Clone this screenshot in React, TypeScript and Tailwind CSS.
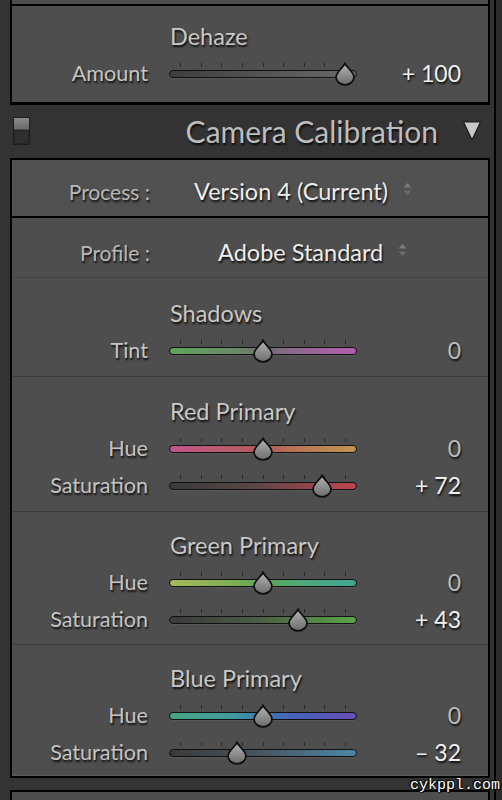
import React from "react";

const FONT = { fontFamily: "Lato, 'Open Sans', sans-serif" };

type SliderProps = { value: number; gradient: string };

function Slider({ value, gradient }: SliderProps) {
  const center = 94 + value * 0.82;
  return (
    <div className="relative w-[188px] h-[24px] flex flex-col justify-end pb-[5px]">
      <div className="flex justify-between px-[11px] h-[4px] mb-[3px]">
        {Array.from({ length: 9 }).map((_, i) => (
          <div key={i} className="w-[1px] h-[4px] bg-[#2a2a2a]" />
        ))}
      </div>
      <div
        className="h-[8px] rounded-full border border-[#111] shadow-[0_1px_0_rgba(255,255,255,0.06)]"
        style={{ background: gradient }}
      />
      <svg
        className="absolute top-[3px]"
        style={{ left: center - 11 }}
        width="22"
        height="24"
        viewBox="0 0 22 24"
      >
        <defs>
          <linearGradient id="thumbg" x1="0" y1="0" x2="0" y2="1">
            <stop offset="0" stopColor="#b4b4b4" />
            <stop offset="1" stopColor="#6c6c6c" />
          </linearGradient>
        </defs>
        <path
          d="M11 1.5 C 13 5.5, 20 10.5, 20 15 A 9 7.8 0 0 1 2 15 C 2 10.5, 9 5.5, 11 1.5 Z"
          fill="url(#thumbg)"
          stroke="#0e0e0e"
          strokeWidth="1.8"
        />
      </svg>
    </div>
  );
}

type RowProps = { label: string; value: number; gradient: string; text: string };

function Row({ label, value, gradient, text }: RowProps) {
  const bright = value !== 0;
  return (
    <div className="flex items-center h-[37px]">
      <div className="w-[136px] text-right text-[21.6px] text-[#c4c4c4] [text-shadow:1px_2px_2px_rgba(0,0,0,0.85)]">
        {label}
      </div>
      <div className="ml-[21px] mt-[-5px]">
        <Slider value={value} gradient={gradient} />
      </div>
      <div
        className={
          bright
            ? "w-[104px] text-right text-[23px] text-[#f0f0f0] [text-shadow:1px_2px_2px_rgba(0,0,0,0.85)]"
            : "w-[104px] text-right text-[23px] text-[#bdbdbd] [text-shadow:1px_2px_2px_rgba(0,0,0,0.85)]"
        }
      >
        {text}
      </div>
    </div>
  );
}

function Title({ children }: { children: React.ReactNode }) {
  return (
    <div className="h-[37px] flex items-center pl-[158px] text-[23.5px] text-[#c8c8c8] [text-shadow:1px_2px_2px_rgba(0,0,0,0.85)]">
      {children}
    </div>
  );
}

function UpDown() {
  return (
    <svg width="11" height="14" viewBox="0 0 11 14" className="ml-[14px] mt-[-4px]">
      <path d="M5.5 1 L9.5 5.5 L1.5 5.5 Z" fill="#7a7a7a" />
      <path d="M5.5 13 L9.5 8.5 L1.5 8.5 Z" fill="#6a6a6a" />
    </svg>
  );
}

const G = {
  amount: "linear-gradient(to right, #3e3e3e, #6a6a6a)",
  tint: "linear-gradient(to right, #5fa35a, #6b8a68 35%, #6e6e6e 50%, #8a6a8a 65%, #b45cb0)",
  redHue: "linear-gradient(to right, #c0568a, #b85a6a 35%, #b05a58 50%, #b8705a 65%, #c0964e)",
  redSat: "linear-gradient(to right, #3a3a3a, #5a4646 45%, #c04450)",
  greenHue: "linear-gradient(to right, #a8b85a, #7cae55 35%, #5aa852 50%, #4fa878 70%, #40a494)",
  greenSat: "linear-gradient(to right, #3a3a3a, #4a5a46 45%, #5aa548)",
  blueHue: "linear-gradient(to right, #45a880, #3f9aa0 35%, #3f78b0 50%, #4860b8 70%, #6a4fb4)",
  blueSat: "linear-gradient(to right, #3a3a3a, #46525a 45%, #4d86a8)",
};

export default function App() {
  return (
    <div className="relative flex w-[502px] h-[800px] bg-[#333333] overflow-hidden" style={FONT}>
      <div className="w-[494px] pl-[10px] pr-[4px] flex flex-col">
        {/* Top panel remnant: Dehaze */}
        <div className="bg-[#4e4e4e] border-x-2 border-b-[3px] border-black">
          <div className="h-[4px]" />
          <div className="border-t-2 border-black pt-[12px] h-[98px]">
            <Title>Dehaze</Title>
            <Row label="Amount" value={100} gradient={G.amount} text="+ 100" />
          </div>
        </div>

        {/* Header */}
        <div className="h-[55px] flex items-center pl-[3px] pr-[8px]">
          <div className="w-[17px] h-[28px] border border-[#1e1e1e] flex flex-col">
            <div className="h-[11px] bg-gradient-to-b from-[#8a8a8a] to-[#6a6a6a]" />
            <div className="flex-1 bg-[#2e2e2e] border-t border-[#4a4a4a] shadow-[inset_0_0_0_1px_#262626]" />
          </div>
          <div className="flex-1 text-right pr-[24px] text-[30px] text-[#bdbdbd] [text-shadow:1px_2px_2px_rgba(0,0,0,0.8)]">
            Camera Calibration
          </div>
          <svg width="20" height="22" viewBox="0 0 20 22">
            <path d="M1.5 2 L18.5 2 L10 20 Z" fill="#c8c8c8" stroke="#1a1a1a" strokeWidth="1.2" strokeLinejoin="round" />
          </svg>
        </div>

        {/* Body */}
        <div className="bg-[#4e4e4e] border-2 border-black">
          <div className="h-[58px] pt-[7px] flex items-center bg-[#515151] border-b-2 border-black">
            <div className="w-[138px] text-right text-[21px] text-[#b8b8b8] [text-shadow:1px_2px_2px_rgba(0,0,0,0.85)]">
              Process :
            </div>
            <div className="ml-[44px] text-[23.5px] text-[#ececec] [text-shadow:1px_2px_2px_rgba(0,0,0,0.85)]">
              Version 4 (Current)
            </div>
            <UpDown />
          </div>
          <div className="h-[60px] pt-[10px] flex items-center border-b border-[#434343]">
            <div className="w-[138px] text-right text-[21px] text-[#b8b8b8] [text-shadow:1px_2px_2px_rgba(0,0,0,0.85)]">
              Profile :
            </div>
            <div className="ml-[68px] text-[23.5px] text-[#ececec] [text-shadow:1px_2px_2px_rgba(0,0,0,0.85)]">
              Adobe Standard
            </div>
            <UpDown />
          </div>

          <div className="pt-[17px] h-[98px]">
            <Title>Shadows</Title>
            <Row label="Tint" value={0} gradient={G.tint} text="0" />
          </div>

          <div className="border-t border-[#3c3c3c] pt-[16px] h-[135px]">
            <Title>Red Primary</Title>
            <Row label="Hue" value={0} gradient={G.redHue} text="0" />
            <Row label="Saturation" value={72} gradient={G.redSat} text="+ 72" />
          </div>

          <div className="border-t border-[#3c3c3c] pt-[15px] h-[133px]">
            <Title>Green Primary</Title>
            <Row label="Hue" value={0} gradient={G.greenHue} text="0" />
            <Row label="Saturation" value={43} gradient={G.greenSat} text="+ 43" />
          </div>

          <div className="border-t border-[#3c3c3c] pt-[15px] h-[132px] border-b border-b-[#5a5a5a]">
            <Title>Blue Primary</Title>
            <Row label="Hue" value={0} gradient={G.blueHue} text="0" />
            <Row label="Saturation" value={-32} gradient={G.blueSat} text="– 32" />
          </div>
        </div>

        <div className="h-[13px]" />
        <div className="border-x-2 border-t-2 border-black bg-[#4e4e4e] h-[10px]" />
      </div>
      <div className="w-[2px] bg-black" />
      <div className="flex-1 bg-[#2c2c2c]" />

      <div
        className="absolute right-[2px] top-[775px] text-[15px] text-white [text-shadow:0_0_2px_#000,1px_1px_1px_#000,-1px_-1px_1px_#000]"
        style={{ fontFamily: "'Liberation Mono', monospace" }}
      >
        cykppl.com
      </div>
    </div>
  );
}
